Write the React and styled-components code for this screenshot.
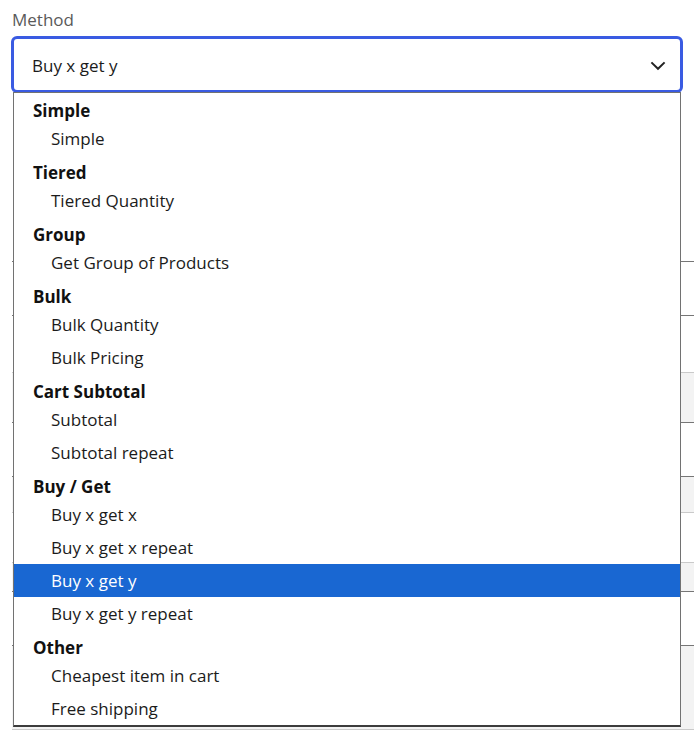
import React from "react";
import styled, { createGlobalStyle } from "styled-components";

const GlobalStyle = createGlobalStyle`
  body {
    margin: 0;
    background: #fff;
    font-family: "Open Sans", "Noto Sans", sans-serif;
    color: #1b1b1b;
  }
`;

const groups = [
  { label: "Simple", options: ["Simple"] },
  { label: "Tiered", options: ["Tiered Quantity"] },
  { label: "Group", options: ["Get Group of Products"] },
  { label: "Bulk", options: ["Bulk Quantity", "Bulk Pricing"] },
  { label: "Cart Subtotal", options: ["Subtotal", "Subtotal repeat"] },
  { label: "Buy / Get", options: ["Buy x get x", "Buy x get x repeat", "Buy x get y", "Buy x get y repeat"] },
  { label: "Other", options: ["Cheapest item in cart", "Free shipping"] },
];

// the form rows that peek out on the right behind the open list
const rows = [
  { gap: 168 },
  { height: 55, top: "dark", bottom: "dark" },
  { gap: 56 },
  { height: 51, top: "light", bottom: "dark", fill: true },
  { gap: 53 },
  { height: 37, top: "dark", bottom: "light", fill: true },
  { gap: 49 },
  { height: 30, top: "light", bottom: "dark", fill: true },
  { gap: 53 },
  { height: 85, top: "dark", bottom: "light", fill: true },
];

const lineColor = { dark: "#767676", light: "#cacaca" };

const Page = styled.div`
  padding: 8px 11px 0;
  overflow: hidden;
`;

const Label = styled.div`
  font-size: 17px;
  line-height: 23px;
  color: #5a5a5a;
  padding-left: 1px;
  margin-bottom: 5px;
`;

const SelectWrap = styled.div`
  position: relative;
`;

const SelectBox = styled.div`
  box-sizing: border-box;
  height: 57px;
  border: 3px solid #3a5be2;
  border-radius: 6px;
  display: flex;
  align-items: center;
  justify-content: space-between;
  padding: 2px 14px 0 18px;
  font-size: 17px;
  color: #1b1b1b;
`;

const Chevron = styled.svg`
  display: block;
  margin-top: 1px;
`;

const Listbox = styled.div`
  position: absolute;
  top: 56px;
  left: 2px;
  width: 668px;
  box-sizing: border-box;
  background: #fff;
  border: 1px solid #727272;
  border-bottom: 2px solid #3c3c3c;
  z-index: 2;
`;

const GroupLabel = styled.div`
  height: 29px;
  box-sizing: border-box;
  padding: 6px 0 0 19px;
  font-size: 17px;
  line-height: 23px;
  font-weight: 700;
  color: #111;
`;

const Option = styled.div`
  height: 33px;
  display: flex;
  align-items: center;
  padding-left: 37px;
  font-size: 17px;
  color: ${({ $active }) => ($active ? "#fff" : "#1b1b1b")};
  background: ${({ $active }) => ($active ? "#1967d2" : "transparent")};
`;

const Backdrop = styled.div`
  margin: 0 -11px 0 1px;
`;

const Gap = styled.div`
  height: ${({ $h }) => $h}px;
`;

const Band = styled.div`
  box-sizing: border-box;
  height: ${({ $h }) => $h}px;
  border-top: 1px solid ${({ $top }) => lineColor[$top]};
  border-bottom: 1px solid ${({ $bottom }) => lineColor[$bottom]};
  background: ${({ $fill }) => ($fill ? "#f3f3f3" : "#fff")};
`;

export default function App() {
  const selected = "Buy x get y";
  return (
    <>
      <GlobalStyle />
      <Page>
        <Label>Method</Label>
        <SelectWrap>
          <SelectBox>
            <span>{selected}</span>
            <Chevron width="16" height="10" viewBox="0 0 16 10">
              <path d="M1.4 1.4 L8 7.8 L14.6 1.4" fill="none" stroke="#222" strokeWidth="2" />
            </Chevron>
          </SelectBox>
          <Listbox>
            {groups.map((g) => (
              <div key={g.label}>
                <GroupLabel>{g.label}</GroupLabel>
                {g.options.map((o) => (
                  <Option key={o} $active={o === selected}>
                    {o}
                  </Option>
                ))}
              </div>
            ))}
          </Listbox>
        </SelectWrap>
        <Backdrop>
          {rows.map((r, i) =>
            r.gap ? (
              <Gap key={i} $h={r.gap} />
            ) : (
              <Band key={i} $h={r.height} $top={r.top} $bottom={r.bottom} $fill={r.fill} />
            )
          )}
        </Backdrop>
      </Page>
    </>
  );
}
